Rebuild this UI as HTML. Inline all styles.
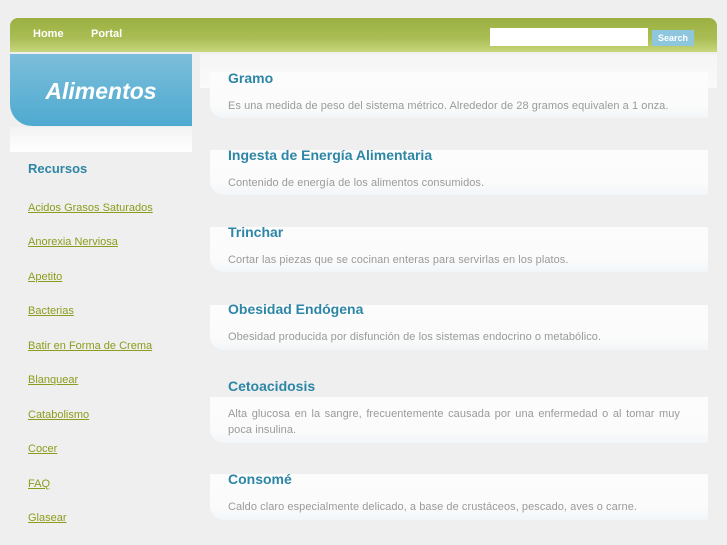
<!DOCTYPE html>
<html><head><meta charset="utf-8"><style>
body{margin:0;background:#efefef;font-family:"Liberation Sans",sans-serif;width:727px;height:545px;overflow:hidden;position:relative}
.nav{position:absolute;left:10px;top:18px;width:707px;height:34px;border-radius:8px 8px 0 0;background:linear-gradient(#9bb041,#a9bd55 60%,#c7d77c)}
.nav a{position:absolute;top:10px;color:#fff;font-weight:bold;font-size:11px;text-decoration:none}
.sin{position:absolute;left:490px;top:28px;width:158px;height:18px;background:#fff}
.sbtn{position:absolute;left:652px;top:30px;width:42px;height:16px;background:#8ec6de;color:#fff;font-size:9px;font-weight:bold;text-align:center;line-height:16px}
.hdr{position:absolute;left:10px;top:54px;width:182px;height:72px;border-radius:0 0 0 22px;background:linear-gradient(#7cbedb,#4eaad0);color:#fff;font-style:italic;font-weight:bold;font-size:23px;text-align:center;line-height:74px}
.hw{position:absolute;left:10px;top:127px;width:182px;height:25px;background:linear-gradient(#f3f3f3,#fff)}
.rec{position:absolute;left:28px;top:161px;color:#2d86a6;font-weight:bold;font-size:13px}
.lk{position:absolute;left:28px;color:#8d9c1c;font-size:11px;text-decoration:underline}
.top{position:absolute;left:200px;top:54px;width:517px;height:34px;background:linear-gradient(#f5f5f5,#fafafa)}
.box{position:absolute;left:210px;width:498px;background:linear-gradient(#fcfcfc,#fbfbfb 70%,#f2f6f9);border-radius:0 0 0 14px}
.t{position:absolute;left:228px;color:#2d86a6;font-weight:bold;font-size:14px}
.d{position:absolute;left:228px;width:452px;color:#9a9a9a;font-size:11px;line-height:16px;text-align:justify;letter-spacing:0.06px}
</style></head><body>
<div class="nav"><a style="left:23px">Home</a><a style="left:81px">Portal</a></div>
<div class="sin"></div><div class="sbtn">Search</div>
<div class="hdr">Alimentos</div><div class="hw"></div>
<div class="rec">Recursos</div>
<div class="lk" style="top:202px">Acidos Grasos Saturados</div>
<div class="lk" style="top:236px">Anorexia Nerviosa</div>
<div class="lk" style="top:271px">Apetito</div>
<div class="lk" style="top:305px">Bacterias</div>
<div class="lk" style="top:340px">Batir en Forma de Crema</div>
<div class="lk" style="top:374px">Blanquear</div>
<div class="lk" style="top:409px">Catabolismo</div>
<div class="lk" style="top:443px">Cocer</div>
<div class="lk" style="top:478px">FAQ</div>
<div class="lk" style="top:512px">Glasear</div>
<div class="top"></div>
<div class="box" style="top:72px;height:46px"></div>
<div class="box" style="top:150px;height:45px"></div>
<div class="box" style="top:227px;height:45px"></div>
<div class="box" style="top:305px;height:45px"></div>
<div class="box" style="top:397px;height:46px"></div>
<div class="box" style="top:474px;height:46px"></div>
<div class="t" style="top:70px">Gramo</div>
<div class="d" style="top:98px">Es una medida de peso del sistema métrico. Alrededor de 28 gramos equivalen a 1 onza.</div>
<div class="t" style="top:147px">Ingesta de Energía Alimentaria</div>
<div class="d" style="top:175px">Contenido de energía de los alimentos consumidos.</div>
<div class="t" style="top:224px">Trinchar</div>
<div class="d" style="top:252px">Cortar las piezas que se cocinan enteras para servirlas en los platos.</div>
<div class="t" style="top:301px">Obesidad Endógena</div>
<div class="d" style="top:329px">Obesidad producida por disfunción de los sistemas endocrino o metabólico.</div>
<div class="t" style="top:378px">Cetoacidosis</div>
<div class="d" style="top:406px">Alta glucosa en la sangre, frecuentemente causada por una enfermedad o al tomar muy poca insulina.</div>
<div class="t" style="top:471px">Consomé</div>
<div class="d" style="top:499px">Caldo claro especialmente delicado, a base de crustáceos, pescado, aves o carne.</div>
</body></html>
